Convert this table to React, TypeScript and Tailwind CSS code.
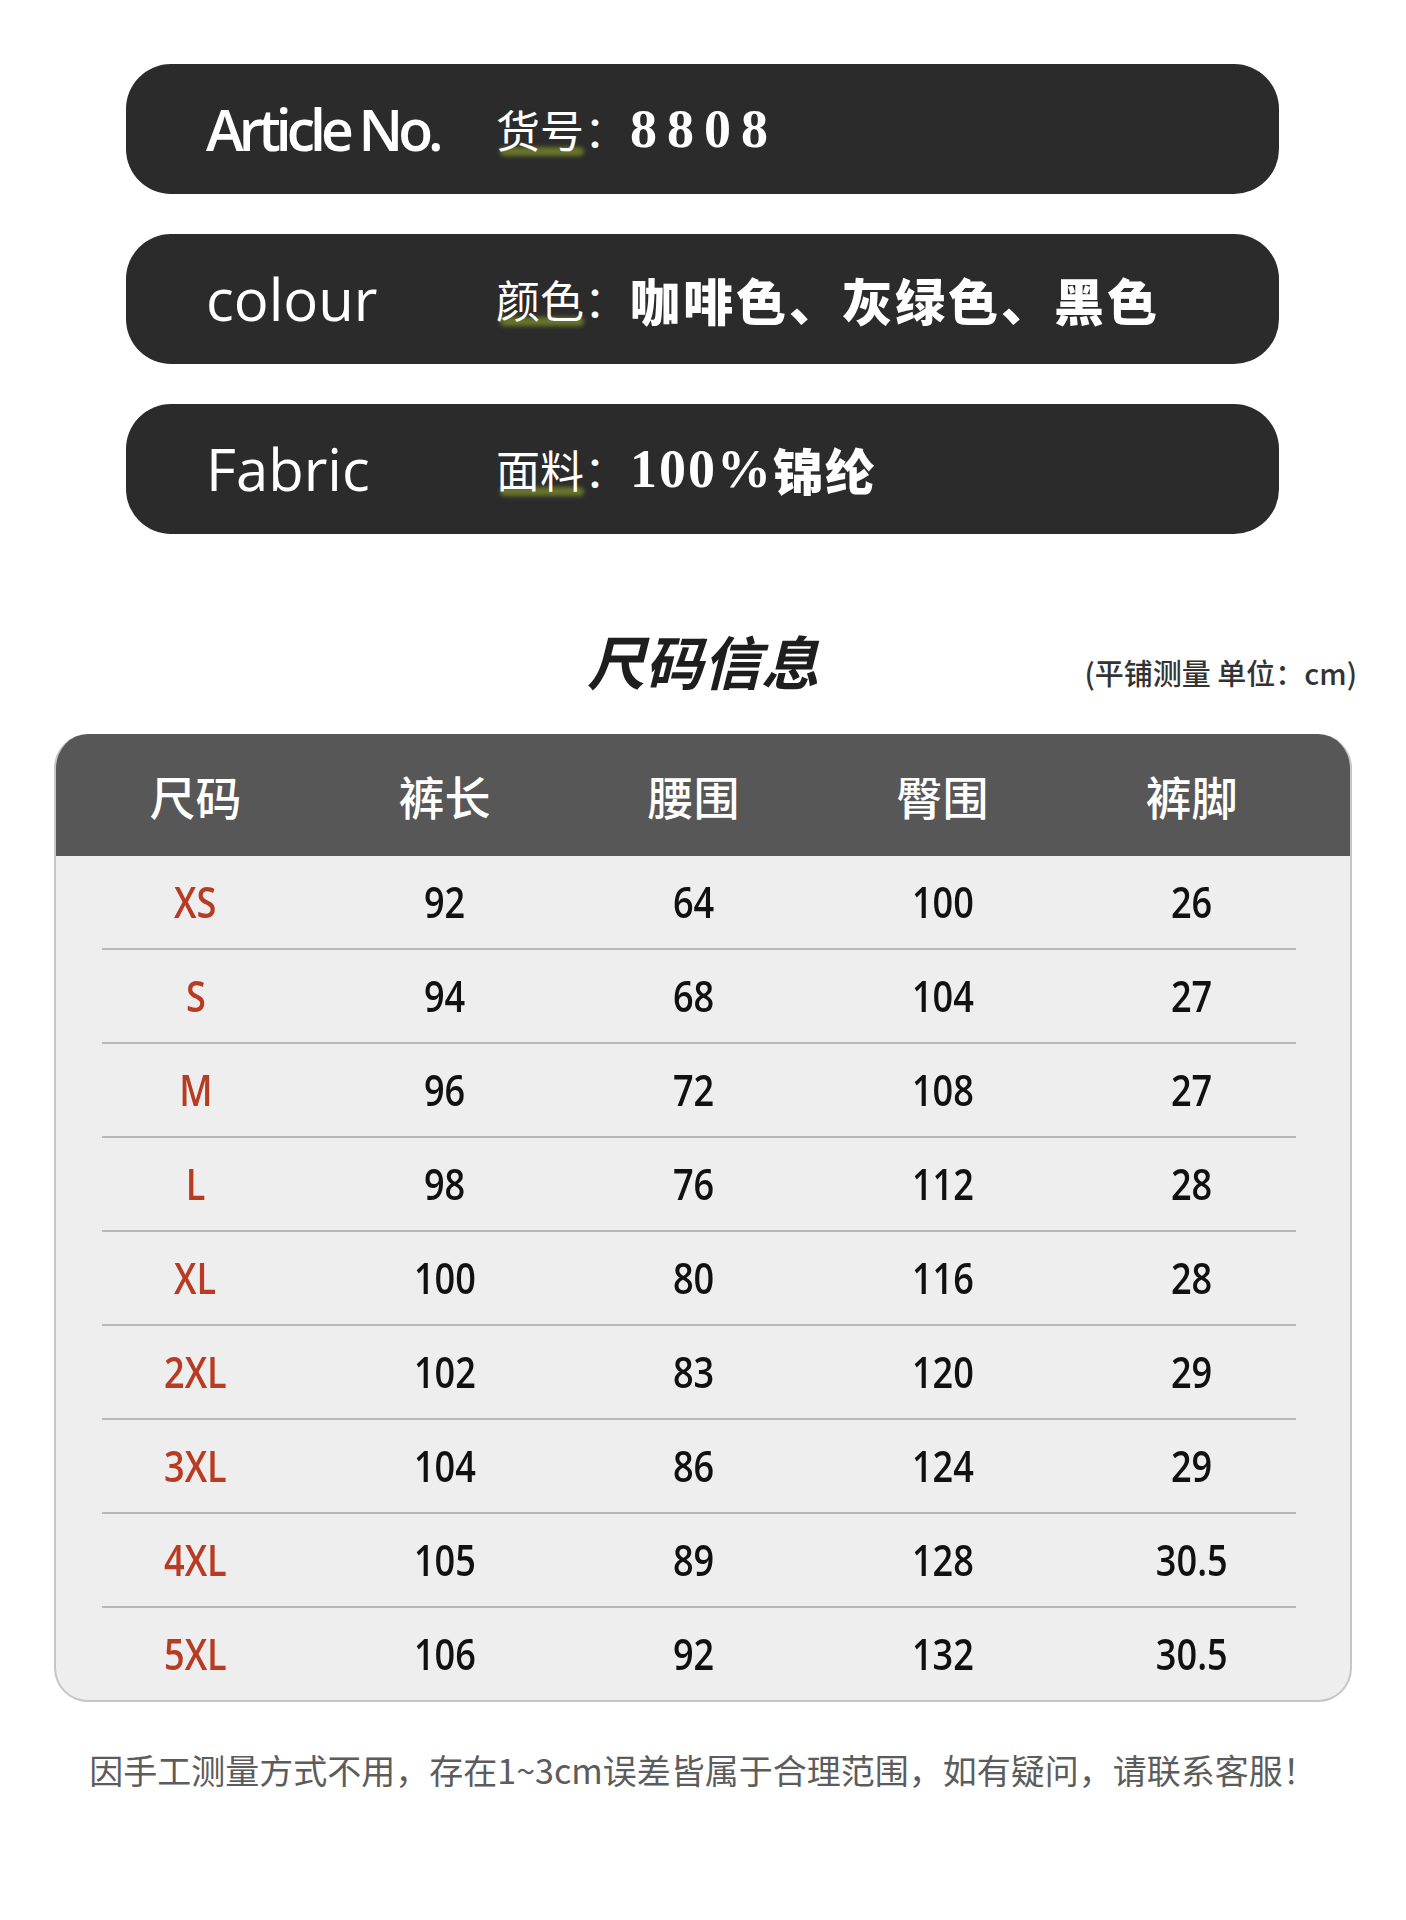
const cjk = "font-['Noto_Sans_CJK_SC',sans-serif]";
const latin = "font-['Open_Sans','Noto_Sans_CJK_SC',sans-serif]";

const sizes = [
  ["XS", "92", "64", "100", "26"],
  ["S", "94", "68", "104", "27"],
  ["M", "96", "72", "108", "27"],
  ["L", "98", "76", "112", "28"],
  ["XL", "100", "80", "116", "28"],
  ["2XL", "102", "83", "120", "29"],
  ["3XL", "104", "86", "124", "29"],
  ["4XL", "105", "89", "128", "30.5"],
  ["5XL", "106", "92", "132", "30.5"],
];

const headers = ["尺码", "裤长", "腰围", "臀围", "裤脚"];

function Label({ text }: { text: string }) {
  return (
    <span className={`relative inline-block text-[44px] leading-none text-white ${cjk}`}>
      <span className="absolute left-[4px] bottom-[-5px] h-[9px] w-[84px] rounded-full bg-[#6f7d2a] opacity-90 blur-[2px]" />
      <span className="relative">{text}</span>
      <span className="relative">：</span>
    </span>
  );
}

function Bar({ title, label, children }: { title: React.ReactNode; label: string; children: React.ReactNode }) {
  return (
    <div className="flex h-[130px] items-center rounded-[45px] bg-[#2b2b2b] pl-[80px]">
      <div className="w-[290px] text-white">{title}</div>
      <Label text={label} />
      <div className="ml-[2px] flex items-center text-white">{children}</div>
    </div>
  );
}

export default function App() {
  return (
    <div className="relative h-[1920px] w-[1406px] bg-white">
      <div className="flex flex-col gap-[40px] pl-[126px] pr-[127px] pt-[64px]">
        <Bar
          title={<span className={`text-[57px] font-semibold leading-none tracking-[-5px] ${latin}`}>Article No.</span>}
          label="货号"
        >
          <span className="font-['Liberation_Serif',serif] text-[54px] font-bold leading-none tracking-[10px]">8808</span>
        </Bar>
        <Bar title={<span className={`text-[58px] font-medium leading-none ${latin}`}>colour</span>} label="颜色">
          <span className={`text-[50px] font-black leading-none tracking-[3px] ${cjk}`}>咖啡色、灰绿色、黑色</span>
        </Bar>
        <Bar title={<span className={`text-[58px] font-medium leading-none ${latin}`}>Fabric</span>} label="面料">
          <span className="font-['Liberation_Serif',serif] text-[54px] font-bold leading-none tracking-[2px]">100%</span>
          <span className={`text-[50px] font-black leading-none tracking-[2px] ${cjk}`}>锦纶</span>
        </Bar>
      </div>

      <div className="mt-[97px] grid grid-cols-[1fr_auto_1fr] px-[49px]">
        <div />
        <h1 className={`text-[58px] font-bold italic leading-none text-[#1e1e1e] ${cjk}`}>尺码信息</h1>
        <div className="flex items-end justify-end">
          <span className={`mb-[2px] text-[29px] font-medium leading-none text-[#333] ${cjk}`}>(平铺测量 单位：cm)</span>
        </div>
      </div>

      <div className="mx-[54px] mt-[45px] overflow-hidden rounded-[34px] border-x-2 border-b-2 border-[#c6c6c6] bg-[#eeeeee]">
        <div className="grid h-[122px] grid-cols-[repeat(5,249px)] items-center bg-[#575757] pl-[15px]">
          {headers.map((h) => (
            <div key={h} className={`text-center text-[46px] font-medium leading-none text-white ${cjk}`}>
              {h}
            </div>
          ))}
        </div>
        {sizes.map((row, i) => (
          <div key={row[0]}>
            {i > 0 && <div className="ml-[46px] mr-[54px] h-[2px] bg-[#b8b8b8]" />}
            <div className="grid h-[92px] grid-cols-[repeat(5,249px)] items-center pl-[15px]">
              {row.map((cell, j) => (
                <div key={j} className="text-center">
                  <span
                    className={`inline-block scale-x-[0.84] text-[43px] font-semibold leading-none ${latin} ${
                      j === 0 ? "text-[#b83b23]" : "text-[#111]"
                    }`}
                  >
                    {cell}
                  </span>
                </div>
              ))}
            </div>
          </div>
        ))}
      </div>

      <p className={`mt-[51px] text-center text-[34px] leading-none text-[#5c5c5c] ${cjk}`}>
        因手工测量方式不用，存在1~3cm误差皆属于合理范围，如有疑问，请联系客服！
      </p>
    </div>
  );
}
